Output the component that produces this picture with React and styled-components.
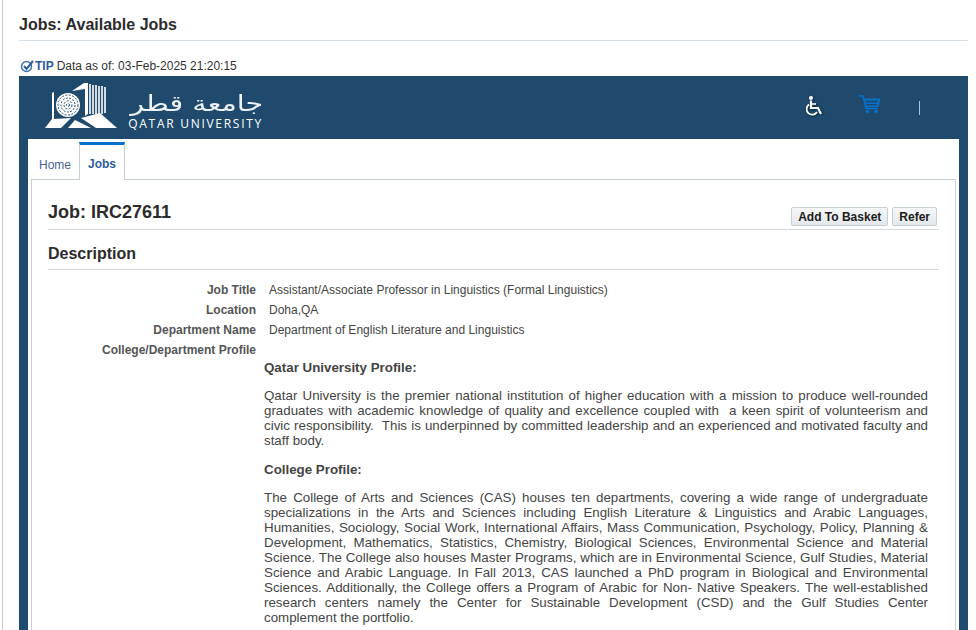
import React from 'react';
import styled, { createGlobalStyle } from 'styled-components';

const GlobalStyle = createGlobalStyle`
  html, body {
    margin: 0;
    padding: 0;
    background: #fff;
    height: 630px;
    overflow: hidden;
    font-family: "Liberation Sans", Arial, sans-serif;
    color: #2b2b2b;
  }
`;

const Page = styled.div`
  width: 976px;
  height: 630px;
  overflow: hidden;
  box-sizing: border-box;
  padding-left: 2px;
`;

const Frame = styled.div`
  border-left: 1px solid #c6ced6;
  height: 630px;
  padding-left: 16px;
  width: 949px;
`;

const PageHeader = styled.div`
  height: 41px;
  box-sizing: border-box;
  border-bottom: 1px solid #d6dfe6;
  width: 949px;
  padding-top: 15px;
`;

const PageTitle = styled.h1`
  margin: 0;
  font-size: 16px;
  line-height: 19px;
  font-weight: 700;
  color: #2b2b2b;
`;

const TipRow = styled.div`
  display: flex;
  align-items: center;
  height: 18px;
  margin-top: 16px;
  padding-left: 1px;
  font-size: 12px;
  color: #333;
`;

const TipLabel = styled.span`
  color: #2d5c9c;
  font-weight: 700;
  margin: 0 3px 0 1px;
`;

const Shell = styled.div`
  background: #1f4a6d;
  width: 949px;
  padding: 0 9px;
  box-sizing: border-box;
  height: 560px;
  margin-top: 1px;
`;

const Banner = styled.div`
  height: 63px;
  display: flex;
  align-items: flex-start;
`;

const Logo = styled.div`
  display: flex;
  align-items: flex-start;
  margin: 6px 0 0 17px;
`;

const LogoText = styled.div`
  display: flex;
  flex-direction: column;
  align-items: flex-end;
  margin: 9px 0 0 10px;
  color: #fff;
  width: 135px;
`;

const LogoArabic = styled.div`
  font-family: "DejaVu Sans", sans-serif;
  font-size: 22px;
  line-height: 25px;
  font-weight: 400;
  direction: rtl;
  color: #eef3f7;
  transform: scaleX(1.3);
  transform-origin: right center;
`;

const LogoLatin = styled.div`
  font-family: "Open Sans", sans-serif;
  font-size: 12px;
  line-height: 14px;
  letter-spacing: 1.72px;
  white-space: nowrap;
  margin-top: 1px;
`;

const BannerIcons = styled.div`
  margin-left: auto;
  display: flex;
  align-items: flex-start;
  padding-top: 19px;
  padding-right: 39px;
`;

const CartSlot = styled.div`
  margin-left: 33px;
`;

const Divider = styled.div`
  width: 1px;
  height: 14px;
  background: #a9c3d8;
  margin: 6px 0 0 38px;
`;

const Body = styled.div`
  background: #fff;
  height: 497px;
  padding: 3px 3px 0;
`;

const Tabs = styled.div`
  display: flex;
  align-items: flex-end;
  height: 37px;
  position: relative;
  z-index: 1;
`;

const Tab = styled.div`
  box-sizing: border-box;
  font-size: 12px;
  height: ${p => (p.$active ? '38px' : '34px')};
  margin-bottom: ${p => (p.$active ? '-1px' : '0')};
  padding: ${p => (p.$active ? '12px 8px 0' : '13px 8px 0')};
  color: ${p => (p.$active ? '#2d5c9c' : '#4a5f96')};
  font-weight: ${p => (p.$active ? 700 : 400)};
  background: #fff;
  border-top: ${p => (p.$active ? '3px solid #0572ce' : 'none')};
  border-left: ${p => (p.$active ? '1px solid #c6ced6' : 'none')};
  border-right: ${p => (p.$active ? '1px solid #c6ced6' : 'none')};
`;

const Panel = styled.div`
  border: 1px solid #c6ced6;
  box-sizing: border-box;
  height: 460px;
  padding: 0 16px;
`;

const JobHead = styled.div`
  display: flex;
  align-items: flex-end;
  justify-content: space-between;
  height: 50px;
  border-bottom: 1px solid #d2d9df;
  box-sizing: border-box;
  padding-bottom: 3px;
  width: 891px;
`;

const JobTitle = styled.h2`
  margin: 0 0 3px;
  font-size: 18px;
  line-height: 21px;
  font-weight: 700;
  color: #2b2b2b;
`;

const Actions = styled.div`
  display: flex;
  gap: 4px;
  margin-right: 2px;
`;

const Button = styled.button`
  font-family: inherit;
  font-size: 12px;
  font-weight: 700;
  color: #1c1c1c;
  height: 19px;
  padding: 0 6px;
  border: 1px solid #c6ced6;
  border-radius: 2px;
  background: linear-gradient(#f6f7f8, #e4e8ea);
`;

const SectionHead = styled.h3`
  margin: 0;
  font-size: 16px;
  line-height: 19px;
  font-weight: 700;
  color: #2b2b2b;
  height: 40px;
  box-sizing: border-box;
  padding-top: 14px;
  border-bottom: 1px solid #d2d9df;
  width: 891px;
`;

const Fields = styled.div`
  display: grid;
  grid-template-columns: 208px 1fr;
  column-gap: 13px;
  grid-auto-rows: 20px;
  font-size: 12px;
  line-height: 20px;
  margin-top: 10px;
`;

const Label = styled.div`
  text-align: right;
  font-weight: 700;
  color: #555;
`;

const Value = styled.div`
  color: #444;
`;

const Rich = styled.div`
  width: 664px;
  margin-left: 216px;
  font-size: 13.33px;
  line-height: 15px;
  color: #444;
`;

const RichHead = styled.p`
  margin: 0 0 13px;
  font-weight: 700;
`;

const RichText = styled.p`
  margin: 0 0 14px;
  text-align: justify;
  white-space: pre-wrap;
`;

const TipIcon = () => (
  <svg width="14" height="14" viewBox="0 0 14 14">
    <circle cx="6.5" cy="7.5" r="5" fill="none" stroke="#3e6fb5" strokeWidth="1.5" />
    <path d="M4 7l2.5 3L13 2" fill="none" stroke="#2d5c9c" strokeWidth="2" />
  </svg>
);

const UniversityMark = () => (
  <svg width="73" height="46" viewBox="0 0 73 46">
    {/* left wing and base */}
    <path d="M0 46L7 37V11L9 10V37L26 36L16 46Z" fill="#fff" />
    {/* tower */}
    <path d="M27 9L39 1H43V32L40 34V7Z" fill="#fff" />
    <path d="M45 2v30M48 3v29M51 3v29M54 4v28M57 4v28M60 5v26" stroke="#fff" strokeWidth="1.6" />
    {/* ramps */}
    <path d="M36 36L55 31L72 46H51Z" fill="#fff" />
    <path d="M23 46L30 38L46 46Z" fill="#fff" />
    {/* tiled globe */}
    <circle cx="23" cy="23" r="12" fill="#fff" />
    <g fill="none" stroke="#1f4a6d" strokeWidth="1" strokeDasharray="2 1.4">
      <circle cx="23" cy="23" r="10" />
      <circle cx="23" cy="23" r="7" />
      <circle cx="23" cy="23" r="4" />
      <circle cx="23" cy="23" r="1.5" />
    </g>
  </svg>
);

const WheelchairIcon = () => (
  <svg width="20" height="22" viewBox="0 0 20 22" style={{ filter: 'drop-shadow(1px 1px 1px #0a2438)' }}>
    <circle cx="5" cy="3" r="2" fill="#fff" />
    <path d="M5 5.5V13H12l3 6" fill="none" stroke="#fff" strokeWidth="2.2" />
    <path d="M3 9.5a5.6 5.6 0 1 0 8 7.5" fill="none" stroke="#fff" strokeWidth="1.8" />
    <path d="M5 9h5" stroke="#fff" strokeWidth="1.6" />
  </svg>
);

const CartIcon = () => (
  <svg width="22" height="19" viewBox="0 0 22 19">
    <path d="M0 1h4l3.2 12.5h11.5" fill="none" stroke="#0572ce" strokeWidth="1.6" />
    <path d="M5 3.5h16.5l-2.3 8.5h-2l1.8-6.5H6zM6.5 7.5h12v1.6h-12zM7 10.5h11v1.5H7z" fill="#0572ce" />
    <circle cx="8.5" cy="16.5" r="1.8" fill="#0572ce" />
    <circle cx="17" cy="16.5" r="1.8" fill="#0572ce" />
  </svg>
);

export default function App() {
  return (
    <>
      <GlobalStyle />
      <Page>
        <Frame>
          <PageHeader>
            <PageTitle>Jobs: Available Jobs</PageTitle>
          </PageHeader>
          <TipRow>
            <TipIcon />
            <TipLabel>TIP</TipLabel> Data as of: 03-Feb-2025 21:20:15
          </TipRow>
          <Shell>
            <Banner>
              <Logo>
                <UniversityMark />
                <LogoText>
                  <LogoArabic>جامعة قطر</LogoArabic>
                  <LogoLatin>QATAR UNIVERSITY</LogoLatin>
                </LogoText>
              </Logo>
              <BannerIcons>
                <WheelchairIcon />
                <CartSlot>
                  <CartIcon />
                </CartSlot>
                <Divider />
              </BannerIcons>
            </Banner>
            <Body>
              <Tabs>
                <Tab>Home</Tab>
                <Tab $active>Jobs</Tab>
              </Tabs>
              <Panel>
                <JobHead>
                  <JobTitle>Job: IRC27611</JobTitle>
                  <Actions>
                    <Button>Add To Basket</Button>
                    <Button>Refer</Button>
                  </Actions>
                </JobHead>
                <SectionHead>Description</SectionHead>
                <Fields>
                  <Label>Job Title</Label>
                  <Value>Assistant/Associate Professor in Linguistics (Formal Linguistics)</Value>
                  <Label>Location</Label>
                  <Value>Doha,QA</Value>
                  <Label>Department Name</Label>
                  <Value>Department of English Literature and Linguistics</Value>
                  <Label>College/Department Profile</Label>
                  <Value />
                </Fields>
                <Rich>
                  <RichHead>Qatar University Profile:</RichHead>
                  <RichText>
                    Qatar University is the premier national institution of higher education with a mission to produce well-rounded graduates with academic knowledge of quality and excellence coupled with  a keen spirit of volunteerism and civic responsibility.  This is underpinned by committed leadership and an experienced and motivated faculty and staff body.
                  </RichText>
                  <RichHead>College Profile:</RichHead>
                  <RichText>
                    The College of Arts and Sciences (CAS) houses ten departments, covering a wide range of undergraduate specializations in the Arts and Sciences including English Literature &amp; Linguistics and Arabic Languages, Humanities, Sociology, Social Work, International Affairs, Mass Communication, Psychology, Policy, Planning &amp; Development, Mathematics, Statistics, Chemistry, Biological Sciences, Environmental Science and Material Science. The College also houses Master Programs, which are in Environmental Science, Gulf Studies, Material Science and Arabic Language. In Fall 2013, CAS launched a PhD program in Biological and Environmental Sciences. Additionally, the College offers a Program of Arabic for Non- Native Speakers. The well-established research centers namely the Center for Sustainable Development (CSD) and the Gulf Studies Center complement the portfolio.
                  </RichText>
                </Rich>
              </Panel>
            </Body>
          </Shell>
        </Frame>
      </Page>
    </>
  );
}
